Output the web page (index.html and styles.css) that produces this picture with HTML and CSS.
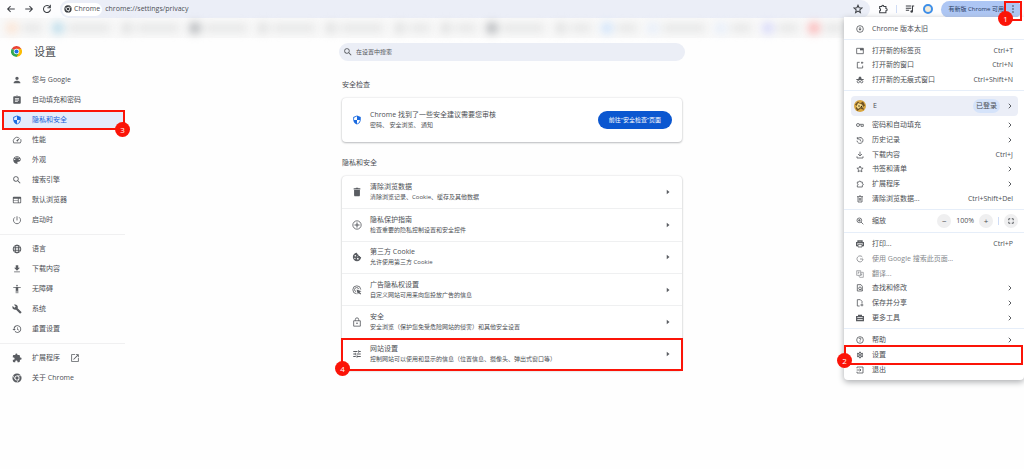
FILE: index.html
```
<!DOCTYPE html>
<html lang="zh-CN">
<head>
  <meta charset="UTF-8">
  <title>设置 - 隐私和安全</title>
  <meta name="viewport" content="width=device-width, initial-scale=1.0">
  <link rel="stylesheet" href="styles.css">
</head>
<body>

<!-- Icon sprite -->
<svg class="sprite" aria-hidden="true">
  <symbol id="back" viewBox="0 0 24 24"><path d="M21 12H4M11 5l-7 7 7 7" class="line"/></symbol>
  <symbol id="forward" viewBox="0 0 24 24"><path d="M3 12h17M13 5l7 7-7 7" class="line"/></symbol>
  <symbol id="reload" viewBox="0 0 24 24"><path d="M19 7a8.500 8.500 0 1 0 1.500 6M20 2v7h-7" class="line"/></symbol>
  <symbol id="chrome" viewBox="0 0 24 24"><path fill-rule="evenodd" d="M12 1a11 11 0 1 0 0 22 11 11 0 0 0 0-22zm0 5a6 6 0 1 1 0 12 6 6 0 0 1 0-12z"/><circle cx="12" cy="12" r="4"/><path d="M12 6.500h10M7 14.500L2.500 6.500M16.500 15l-5 8" stroke="#fff" stroke-width="1.500"/></symbol>
  <symbol id="star" viewBox="0 0 24 24"><path d="M12 3l2.700 6.100 6.600.6-5 4.400 1.500 6.500-5.800-3.400-5.800 3.400 1.500-6.500-5-4.400 6.600-.6z" class="line"/></symbol>
  <symbol id="puzzle" viewBox="0 0 24 24"><path d="M4 6h5c0-4 5-4 5 0h5v5c4 0 4 5 0 5v5H4v-5c3 0 3-5 0-5z" class="line"/></symbol>
  <symbol id="playlist" viewBox="0 0 24 24"><path d="M2 5h13M2 10h13M2 15h8M18 18V5h4" class="line"/><circle cx="16" cy="18" r="3"/></symbol>
  <symbol id="dots" viewBox="0 0 24 24"><circle cx="12" cy="3" r="2.500"/><circle cx="12" cy="12" r="2.500"/><circle cx="12" cy="21" r="2.500"/></symbol>
  <symbol id="person" viewBox="0 0 24 24"><path d="M12 12c2.210 0 4-1.790 4-4s-1.790-4-4-4-4 1.790-4 4 1.790 4 4 4zm0 2c-2.670 0-8 1.340-8 4v2h16v-2c0-2.660-5.330-4-8-4z"/></symbol>
  <symbol id="clipboard" viewBox="0 0 24 24"><path d="M19 3h-4.180C14.400 1.840 13.300 1 12 1c-1.300 0-2.400.84-2.820 2H5c-1.100 0-2 .9-2 2v14c0 1.100.9 2 2 2h14c1.100 0 2-.9 2-2V5c0-1.100-.9-2-2-2zm-7 0c.55 0 1 .45 1 1s-.45 1-1 1-1-.45-1-1 .45-1 1-1zm2 14H7v-2h7v2zm3-4H7v-2h10v2zm0-4H7V7h10v2z"/></symbol>
  <symbol id="shield" viewBox="0 0 24 24"><path d="M12 1L3 5v6c0 5.550 3.840 10.740 9 12 5.160-1.260 9-6.450 9-12V5l-9-4zm0 10.990h7c-.53 4.120-3.280 7.790-7 8.940V12H5V6.300l7-3.110v8.800z"/></symbol>
  <symbol id="speed" viewBox="0 0 24 24"><path d="M16 6A9.500 9.500 0 0 0 4 19h16a9.500 9.500 0 0 0 1-9" class="line thin"/><path d="M20 6l-7 10-3-3z"/></symbol>
  <symbol id="palette" viewBox="0 0 24 24"><path d="M12 3c-4.970 0-9 4.030-9 9s4.030 9 9 9c.83 0 1.500-.67 1.500-1.500 0-.39-.15-.74-.39-1.010-.23-.26-.38-.61-.38-.99 0-.83.67-1.500 1.500-1.500H16c2.760 0 5-2.240 5-5 0-4.420-4.030-8-9-8zm-5.500 9a1.500 1.500 0 1 1 0-3 1.500 1.500 0 0 1 0 3zm3-4a1.500 1.500 0 1 1 0-3 1.500 1.500 0 0 1 0 3zm5 0a1.500 1.500 0 1 1 0-3 1.500 1.500 0 0 1 0 3zm3 4a1.500 1.500 0 1 1 0-3 1.500 1.500 0 0 1 0 3z"/></symbol>
  <symbol id="search" viewBox="0 0 24 24"><path d="M15.500 14h-.79l-.28-.27A6.471 6.471 0 0 0 16 9.500 6.500 6.500 0 1 0 9.500 16c1.610 0 3.090-.59 4.230-1.570l.27.28v.79l5 4.990L20.490 19l-4.990-5zm-6 0C7.010 14 5 11.990 5 9.500S7.010 5 9.500 5 14 7.010 14 9.500 11.990 14 9.500 14z"/></symbol>
  <symbol id="web" viewBox="0 0 24 24"><path fill-rule="evenodd" d="M20 4H4a2 2 0 0 0-2 2v12c0 1.100.9 2 2 2h16a2 2 0 0 0 2-2V6a2 2 0 0 0-2-2zm-6 14H4v-3.500h10V18zm0-5H4V9h10v4zm6 5h-4V9h4v9z"/></symbol>
  <symbol id="power" viewBox="0 0 24 24"><path d="M12 3v10M7 5.500a8.500 8.500 0 1 0 10 0" class="line thin"/></symbol>
  <symbol id="globe" viewBox="0 0 24 24"><circle cx="12" cy="12" r="9" class="line"/><ellipse cx="12" cy="12" rx="4" ry="9" class="line"/><path d="M3.500 9h17M3.500 15h17" class="line"/></symbol>
  <symbol id="download" viewBox="0 0 24 24"><path d="M19 9h-4V3H9v6H5l7 7 7-7zM5 18v2h14v-2H5z"/></symbol>
  <symbol id="accessibility" viewBox="0 0 24 24"><path d="M12 2c1.100 0 2 .9 2 2s-.9 2-2 2-2-.9-2-2 .9-2 2-2zm9 7h-6v13h-2v-6h-2v6H9V9H3V7h18v2z"/></symbol>
  <symbol id="wrench" viewBox="0 0 24 24"><path d="M22.700 19l-9.100-9.100c.9-2.300.4-5-1.500-6.900-2-2-5-2.400-7.400-1.300L9 6 6 9 1.600 4.700C.4 7.100.9 10.100 2.900 12.100c1.900 1.900 4.600 2.400 6.900 1.500l9.100 9.100c.4.4 1 .4 1.400 0l2.300-2.300c.5-.4.5-1.100.1-1.400z"/></symbol>
  <symbol id="restore" viewBox="0 0 24 24"><path d="M13 3a9 9 0 0 0-9 9H1l3.890 3.890.07.14L9 12H6a7 7 0 1 1 2.060 4.940l-1.420 1.420A9 9 0 1 0 13 3zm-1 5v5l4.280 2.540.72-1.210-3.500-2.080V8H12z"/></symbol>
  <symbol id="extension" viewBox="0 0 24 24"><path d="M20.500 11H19V7c0-1.100-.9-2-2-2h-4V3.500a2.500 2.500 0 0 0-5 0V5H4c-1.100 0-1.990.9-1.990 2v3.800H3.500c1.490 0 2.700 1.210 2.700 2.700s-1.210 2.700-2.700 2.700H2V20c0 1.100.9 2 2 2h3.800v-1.500c0-1.490 1.210-2.700 2.700-2.700s2.700 1.210 2.700 2.700V22H17c1.100 0 2-.9 2-2v-4h1.500a2.500 2.500 0 0 0 0-5z"/></symbol>
  <symbol id="launch" viewBox="0 0 24 24"><path d="M19 19H5V5h7V3H3v18h18v-9h-2v7zM14 3v2h3.590l-9.830 9.830 1.410 1.410L19 6.410V10h2V3h-7z"/></symbol>
  <symbol id="trash" viewBox="0 0 24 24"><path d="M5 19c0 1.600.9 3 2 3h10c1.100 0 2-1.400 2-3V7H5v12zM20 3h-4.500l-1-1h-5l-1 1H4v3h16V3z"/></symbol>
  <symbol id="trash-line" viewBox="0 0 24 24"><path d="M3 5h18M9 3h6M6 5v16h12V5M10 9v8M14 9v8" class="line"/></symbol>
  <symbol id="guide" viewBox="0 0 24 24"><circle cx="12" cy="12" r="10" class="line thin"/><path d="M12 6v12M6 12h12" class="line"/></symbol>
  <symbol id="cookie" viewBox="0 0 24 24"><path fill-rule="evenodd" d="M12 2a10 10 0 1 0 10 10c-2 .5-3-1-3-2.500-2 .5-4-1-3.500-3C13.500 6.500 12 4.500 12 2zM8 7a2 2 0 1 1 0 4 2 2 0 0 1 0-4zm-1 7a1.500 1.500 0 1 1 0 3 1.500 1.500 0 0 1 0-3zm7 0a2 2 0 1 1 0 4 2 2 0 0 1 0-4zm-1-4a1 1 0 1 1 0 2 1 1 0 0 1 0-2z"/></symbol>
  <symbol id="ads" viewBox="0 0 24 24"><path d="M11 21a9.500 9.500 0 1 1 10-10M10 16a5 5 0 1 1 6-6" class="line thin"/><path d="M11 11l12 4-5 2 4 4-2 2-4-4-2 4z"/></symbol>
  <symbol id="lock" viewBox="0 0 24 24"><path d="M4 9h16v13H4zM8 9V6a4 4 0 0 1 8 0v3" class="line thin"/><circle cx="12" cy="15" r="2"/></symbol>
  <symbol id="tune" viewBox="0 0 24 24"><path d="M3 17v2h6v-2H3zM3 5v2h10V5H3zm10 16v-2h8v-2h-8v-2h-2v6h2zM7 9v2H3v2h4v2h2V9H7zm14 4v-2H11v2h10zm-6-4h2V7h4V5h-4V3h-2v6z"/></symbol>
  <symbol id="arrow" viewBox="0 0 24 24"><path d="M7 3l11 9-11 9z"/></symbol>
  <symbol id="chevron" viewBox="0 0 24 24"><path d="M7 3l9 9-9 9" class="line bold"/></symbol>
  <symbol id="update" viewBox="0 0 24 24"><circle cx="12" cy="12" r="10" class="line"/><path d="M12 6v6" class="line"/><path d="M7 11h10l-5 6z"/></symbol>
  <symbol id="tab" viewBox="0 0 24 24"><path d="M2 4h20v16H2z" class="line"/><path d="M12 4h10v6H12z"/></symbol>
  <symbol id="window" viewBox="0 0 24 24"><path d="M11 4H4v17h16v-7M15 5h7M18 2v7" class="line"/></symbol>
  <symbol id="incognito" viewBox="0 0 24 24"><path d="M7 9l2-7h6l2 7zM1 9h22v3H1z"/><circle cx="7" cy="17" r="3.500" class="line"/><circle cx="17" cy="17" r="3.500" class="line"/></symbol>
  <symbol id="key" viewBox="0 0 24 24"><circle cx="6" cy="12" r="4.500" class="line"/><path d="M10 10h12v6h-7v-5" class="line"/></symbol>
  <symbol id="history" viewBox="0 0 24 24"><path d="M4 3v6h6M4 9a9 9 0 1 1-1 5M12 8v5l4 3" class="line"/></symbol>
  <symbol id="save" viewBox="0 0 24 24"><path d="M12 2v12M6 9l6 6 6-6M3 16v5h18v-5" class="line"/></symbol>
  <symbol id="zoom-in" viewBox="0 0 24 24"><circle cx="10" cy="10" r="7" class="line"/><path d="M15 15l7 7M10 6v8M6 10h8" class="line"/></symbol>
  <symbol id="fullscreen" viewBox="0 0 24 24"><path d="M3 9V3h6M15 3h6v6M21 15v6h-6M9 21H3v-6" class="line bold"/></symbol>
  <symbol id="print" viewBox="0 0 24 24"><path d="M6 8V3h12v5M6 17H2V8h20v9h-4" class="line bold"/><path d="M6 13h12v8H6z" class="line"/></symbol>
  <symbol id="google" viewBox="0 0 24 24"><path d="M19 6a9 9 0 1 0 2 6h-9" class="line"/></symbol>
  <symbol id="translate" viewBox="0 0 24 24"><path d="M2 2h12v14H2zM14 7h8v15H11l-3-6M5 6h6M8 6c0 3-1 5-3 6M14 12h5M17 12l-3 6" class="line thin"/></symbol>
  <symbol id="find" viewBox="0 0 24 24"><path d="M19 21H4V2h11l4 5z" class="line"/><circle cx="12" cy="13" r="4" class="line"/><path d="M15 16l4 4" class="line"/></symbol>
  <symbol id="share" viewBox="0 0 24 24"><path d="M11 21H4V2h9l5 5v5M13 18h9M18 13v9" class="line"/></symbol>
  <symbol id="toolbox" viewBox="0 0 24 24"><path d="M2 8h20v12H2zM8 8V4h8v4M2 14h20" class="line bold"/></symbol>
  <symbol id="help" viewBox="0 0 24 24"><circle cx="12" cy="12" r="10" class="line"/><path d="M9 9c0-4 6-4 6 0 0 2-3 2-3 5M12 16v2" class="line"/></symbol>
  <symbol id="gear" viewBox="0 0 24 24"><path fill-rule="evenodd" d="M19.140 12.940c.04-.3.060-.61.060-.94s-.02-.64-.07-.94l2.030-1.580c.18-.14.230-.41.120-.61l-1.920-3.320c-.12-.22-.37-.29-.59-.22l-2.390.96c-.5-.38-1.030-.7-1.620-.94L14.400 2.810c-.04-.24-.24-.41-.48-.41h-3.840c-.24 0-.43.170-.47.410L9.250 5.350c-.59.240-1.130.570-1.620.940l-2.390-.96c-.22-.08-.47 0-.59.220L2.740 8.870c-.12.210-.08.470.120.610l2.030 1.580c-.05.3-.09.630-.09.940s.020.640.070.940l-2.030 1.580c-.18.140-.23.410-.12.610l1.920 3.320c.12.220.370.290.590.220l2.390-.96c.5.380 1.030.7 1.620.940l.36 2.540c.05.240.24.410.48.410h3.840c.24 0 .44-.17.470-.41l.36-2.540c.59-.24 1.130-.56 1.620-.94l2.390.96c.22.080.47 0 .59-.22l1.920-3.320c.12-.22.070-.47-.12-.61l-2.010-1.580zM12 7a5 5 0 1 1 0 10 5 5 0 0 1 0-10z"/><circle cx="12" cy="12" r="3"/></symbol>
  <symbol id="exit" viewBox="0 0 24 24"><path d="M3 7V3h18v18H3v-4M2 12h13M11 8l4 4-4 4" class="line"/></symbol>
</svg>

<!-- Browser toolbar -->
<header class="toolbar">
  <button class="tool-button" aria-label="后退"><svg class="icon"><use href="#back"/></svg></button>
  <button class="tool-button" aria-label="前进"><svg class="icon"><use href="#forward"/></svg></button>
  <button class="tool-button" aria-label="重新加载"><svg class="icon"><use href="#reload"/></svg></button>
  <div class="omnibox">
    <span class="chip"><svg class="icon small"><use href="#chrome"/></svg>Chrome</span>
    <input class="address" type="text" value="chrome://settings/privacy" aria-label="地址">
    <button class="tool-button" aria-label="添加书签"><svg class="icon"><use href="#star"/></svg></button>
  </div>
  <div class="tools">
    <button class="tool-button" aria-label="扩展程序"><svg class="icon"><use href="#puzzle"/></svg></button>
    <span class="divider"></span>
    <button class="tool-button" aria-label="媒体"><svg class="icon"><use href="#playlist"/></svg></button>
    <button class="profile-dot" aria-label="个人资料"></button>
  </div>
  <button class="update-pill">
    <span class="update-text">有新版 Chrome 可用</span>
    <span class="more"><svg class="icon small"><use href="#dots"/></svg><span class="mark"></span><span class="badge">1</span></span>
  </button>
</header>

<!-- Bookmarks -->
<div class="bookmarks">
  <span class="bookmark orange"></span>
  <span class="bookmark blue wide"></span>
  <span class="bookmark wide"></span>
  <span class="bookmark dark wide"></span>
  <span class="bookmark wide"></span>
  <span class="bookmark wide"></span>
  <span class="bookmark"></span>
  <span class="bookmark"></span>
  <span class="bookmark dark wide"></span>
  <span class="bookmark"></span>
  <span class="bookmark sky"></span>
  <span class="bookmark pale wide"></span>
  <span class="bookmark pale"></span>
  <span class="bookmark violet"></span>
  <span class="bookmark red"></span>
</div>

<div class="page">
  <aside class="sidebar">
    <div class="brand">
      <svg class="logo" viewBox="0 0 48 48">
        <path fill="#ea4335" d="M24 24L3.200 12A24 24 0 0 1 44.800 12z"/>
        <path fill="#fbbc04" d="M24 24l20.800-12A24 24 0 0 1 24 48z"/>
        <path fill="#34a853" d="M24 24v24A24 24 0 0 1 3.200 12z"/>
        <path fill="#fbbc04" d="M24 12h20.800L34 30 24 48z"/>
        <path fill="#34a853" d="M3.200 12L14 30l10 6 10-6-10 18z"/>
        <circle cx="24" cy="24" r="12" fill="#fff"/>
        <circle cx="24" cy="24" r="9" fill="#1a73e8"/>
      </svg>
      <h1>设置</h1>
    </div>
    <nav>
      <div class="nav-group">
        <a href="#" class="nav-item"><svg class="icon"><use href="#person"/></svg>您与 Google</a>
        <a href="#" class="nav-item"><svg class="icon"><use href="#clipboard"/></svg>自动填充和密码</a>
        <a href="#" class="nav-item active"><svg class="icon"><use href="#shield"/></svg>隐私和安全<span class="mark"></span><span class="badge">3</span></a>
        <a href="#" class="nav-item"><svg class="icon"><use href="#speed"/></svg>性能</a>
        <a href="#" class="nav-item"><svg class="icon"><use href="#palette"/></svg>外观</a>
        <a href="#" class="nav-item"><svg class="icon"><use href="#search"/></svg>搜索引擎</a>
        <a href="#" class="nav-item"><svg class="icon"><use href="#web"/></svg>默认浏览器</a>
        <a href="#" class="nav-item"><svg class="icon"><use href="#power"/></svg>启动时</a>
      </div>
      <div class="nav-group">
        <a href="#" class="nav-item"><svg class="icon"><use href="#globe"/></svg>语言</a>
        <a href="#" class="nav-item"><svg class="icon"><use href="#download"/></svg>下载内容</a>
        <a href="#" class="nav-item"><svg class="icon"><use href="#accessibility"/></svg>无障碍</a>
        <a href="#" class="nav-item"><svg class="icon"><use href="#wrench"/></svg>系统</a>
        <a href="#" class="nav-item"><svg class="icon"><use href="#restore"/></svg>重置设置</a>
      </div>
      <div class="nav-group">
        <a href="#" class="nav-item"><svg class="icon"><use href="#extension"/></svg>扩展程序<svg class="icon"><use href="#launch"/></svg></a>
        <a href="#" class="nav-item"><svg class="icon"><use href="#chrome"/></svg>关于 Chrome</a>
      </div>
    </nav>
  </aside>

  <main class="content">
    <label class="search">
      <svg class="icon"><use href="#search"/></svg>
      <input type="text" placeholder="在设置中搜索" aria-label="在设置中搜索">
    </label>

    <section>
      <h2>安全检查</h2>
      <div class="card check">
        <svg class="icon accent"><use href="#shield"/></svg>
        <div class="text">
          <h3>Chrome 找到了一些安全建议需要您审核</h3>
          <p>密码、 安全浏览、 通知</p>
        </div>
        <button class="primary">前往“安全检查”页面</button>
      </div>
    </section>

    <section>
      <h2>隐私和安全</h2>
      <div class="card list">
        <a href="#" class="row"><svg class="icon"><use href="#trash"/></svg>
          <span class="text"><strong>清除浏览数据</strong><span>清除浏览记录、Cookie、缓存及其他数据</span></span>
          <svg class="icon tiny"><use href="#arrow"/></svg></a>
        <a href="#" class="row"><svg class="icon"><use href="#guide"/></svg>
          <span class="text"><strong>隐私保护指南</strong><span>检查重要的隐私控制设置和安全控件</span></span>
          <svg class="icon tiny"><use href="#arrow"/></svg></a>
        <a href="#" class="row"><svg class="icon"><use href="#cookie"/></svg>
          <span class="text"><strong>第三方 Cookie</strong><span>允许使用第三方 Cookie</span></span>
          <svg class="icon tiny"><use href="#arrow"/></svg></a>
        <a href="#" class="row"><svg class="icon"><use href="#ads"/></svg>
          <span class="text"><strong>广告隐私权设置</strong><span>自定义网站可用来向您投放广告的信息</span></span>
          <svg class="icon tiny"><use href="#arrow"/></svg></a>
        <a href="#" class="row"><svg class="icon"><use href="#lock"/></svg>
          <span class="text"><strong>安全</strong><span>安全浏览（保护您免受危险网站的侵害）和其他安全设置</span></span>
          <svg class="icon tiny"><use href="#arrow"/></svg></a>
        <a href="#" class="row"><svg class="icon"><use href="#tune"/></svg>
          <span class="text"><strong>网站设置</strong><span>控制网站可以使用和显示的信息（位置信息、摄像头、弹出式窗口等）</span></span>
          <svg class="icon tiny"><use href="#arrow"/></svg>
          <span class="mark"></span><span class="badge">4</span></a>
      </div>
    </section>
  </main>
</div>

<!-- Main menu -->
<div class="menu">
  <div class="menu-group">
    <button class="menu-item"><svg class="icon small"><use href="#update"/></svg><span>Chrome 版本太旧</span></button>
  </div>
  <div class="menu-group three">
    <button class="menu-item"><svg class="icon small"><use href="#tab"/></svg><span>打开新的标签页</span><kbd>Ctrl+T</kbd></button>
    <button class="menu-item"><svg class="icon small"><use href="#window"/></svg><span>打开新的窗口</span><kbd>Ctrl+N</kbd></button>
    <button class="menu-item"><svg class="icon small"><use href="#incognito"/></svg><span>打开新的无痕式窗口</span><kbd>Ctrl+Shift+N</kbd></button>
  </div>
  <div class="menu-account">
    <button class="account">
      <svg class="avatar" viewBox="0 0 24 24"><circle cx="12" cy="12" r="12" fill="#d9a640"/><path d="M2 9l6-6 4 4 6-4 4 8-4 3 2 6-7-3-6 5-4-6 4-3z" fill="#705325"/><path d="M8 6l8 3 3 6-6-1-5 4-3-5z" fill="#f6dc8d"/><circle cx="10" cy="12" r="1.500" fill="#33270f"/><circle cx="15" cy="13" r="1.500" fill="#33270f"/></svg>
      <span>E</span><span class="status">已登录</span><svg class="icon tiny"><use href="#chevron"/></svg>
    </button>
  </div>
  <div class="menu-group six flush">
    <button class="menu-item"><svg class="icon small"><use href="#key"/></svg><span>密码和自动填充</span><svg class="icon tiny"><use href="#chevron"/></svg></button>
    <button class="menu-item"><svg class="icon small"><use href="#history"/></svg><span>历史记录</span><svg class="icon tiny"><use href="#chevron"/></svg></button>
    <button class="menu-item"><svg class="icon small"><use href="#save"/></svg><span>下载内容</span><kbd>Ctrl+J</kbd></button>
    <button class="menu-item"><svg class="icon small"><use href="#star"/></svg><span>书签和清单</span><svg class="icon tiny"><use href="#chevron"/></svg></button>
    <button class="menu-item"><svg class="icon small"><use href="#puzzle"/></svg><span>扩展程序</span><svg class="icon tiny"><use href="#chevron"/></svg></button>
    <button class="menu-item"><svg class="icon small"><use href="#trash-line"/></svg><span>清除浏览数据...</span><kbd>Ctrl+Shift+Del</kbd></button>
  </div>
  <div class="menu-zoom">
    <svg class="icon small"><use href="#zoom-in"/></svg><span>缩放</span>
    <button class="round" aria-label="缩小">−</button>
    <output>100%</output>
    <button class="round" aria-label="放大">+</button>
    <i class="divider"></i>
    <button class="round" aria-label="全屏"><svg class="icon tiny"><use href="#fullscreen"/></svg></button>
  </div>
  <div class="menu-group six">
    <button class="menu-item"><svg class="icon small"><use href="#print"/></svg><span>打印...</span><kbd>Ctrl+P</kbd></button>
    <button class="menu-item muted"><svg class="icon small"><use href="#google"/></svg><span>使用 Google 搜索此页面...</span></button>
    <button class="menu-item muted"><svg class="icon small"><use href="#translate"/></svg><span>翻译...</span></button>
    <button class="menu-item"><svg class="icon small"><use href="#find"/></svg><span>查找和修改</span><svg class="icon tiny"><use href="#chevron"/></svg></button>
    <button class="menu-item"><svg class="icon small"><use href="#share"/></svg><span>保存并分享</span><svg class="icon tiny"><use href="#chevron"/></svg></button>
    <button class="menu-item"><svg class="icon small"><use href="#toolbox"/></svg><span>更多工具</span><svg class="icon tiny"><use href="#chevron"/></svg></button>
  </div>
  <div class="menu-group three">
    <button class="menu-item"><svg class="icon small"><use href="#help"/></svg><span>帮助</span><svg class="icon tiny"><use href="#chevron"/></svg></button>
    <button class="menu-item marked"><svg class="icon small"><use href="#gear"/></svg><span>设置</span><span class="mark"></span><span class="badge">2</span></button>
    <button class="menu-item"><svg class="icon small"><use href="#exit"/></svg><span>退出</span></button>
  </div>
</div>

</body>
</html>
```
FILE: styles.css
```
* {
  box-sizing: border-box;
}

body {
  margin: 0;
  background: #fefefe;
  color: #4c4f54;
  font-family: "Open Sans", "Noto Sans CJK SC", sans-serif;
  font-size: 7px;
  line-height: 10px;
}

button, input, kbd {
  font: inherit;
  color: inherit;
}

button {
  border: none;
  padding: 0;
  background: none;
  cursor: pointer;
}

input {
  border: none;
  outline: none;
  padding: 0;
  background: none;
  min-width: 0;
  flex: 1;
}

a {
  color: inherit;
  text-decoration: none;
}

h1, h2, h3, p {
  margin: 0;
  font-weight: normal;
}

.sprite {
  display: none;
}

.icon {
  display: block;
  flex: none;
  width: 10px;
  height: 10px;
  fill: currentColor;
  color: #5a5d62;
}

.icon.small {
  width: 8px;
  height: 8px;
}

.icon.tiny {
  width: 6px;
  height: 6px;
}

.icon.accent {
  color: #1a6ae0;
}

.line {
  fill: none;
  stroke: currentColor;
  stroke-width: 2.5;
}

.line.thin {
  stroke-width: 2;
}

.line.bold {
  stroke-width: 4;
}

/* Numbered callouts */
.mark {
  position: absolute;
  inset: 0;
  border: 2px solid #fb1408;
}

.badge {
  position: absolute;
  width: 15px;
  height: 15px;
  border-radius: 50%;
  background: #fb1408;
  color: #fff;
  font-size: 8px;
  line-height: 15px;
  text-align: center;
}

/* Toolbar */
.toolbar {
  display: flex;
  align-items: center;
  height: 18px;
  padding: 0 2px 0 6px;
  gap: 8px;
  background: #fdfdfe;
}

.toolbar .icon {
  color: #3c3f44;
}

.omnibox {
  display: flex;
  align-items: center;
  flex: 1;
  height: 18px;
  padding: 0 7px 0 2px;
  border-radius: 9px;
  background: #ebeef7;
}

.chip {
  display: flex;
  align-items: center;
  gap: 2px;
  height: 13px;
  padding: 0 2px;
  margin-right: 3px;
  border-radius: 7px;
  background: #fff;
}

.tools {
  display: flex;
  align-items: center;
  gap: 8px;
}

.divider {
  width: 1px;
  height: 8px;
  background: #cfdcf5;
}

.profile-dot {
  width: 10px;
  height: 10px;
  border: 2px solid #3d8ee8;
  border-radius: 50%;
  background: #f3ead8;
}

.update-pill {
  display: flex;
  align-items: center;
  justify-content: space-between;
  height: 17px;
  padding-left: 7px;
  border-radius: 9px;
  background: #adc6f4;
  color: #2a3c60;
  font-size: 6px;
  white-space: nowrap;
}

.more {
  position: relative;
  z-index: 3;
  display: grid;
  place-items: center;
  flex: none;
  width: 18px;
  height: 17px;
}

.more .mark {
  bottom: -3px;
}

.more .badge {
  left: -6px;
  top: 10px;
}

/* Bookmarks are unreadable on purpose */
.bookmarks {
  display: flex;
  align-items: center;
  justify-content: space-between;
  height: 20px;
  padding: 0 180px 0 6px;
  background: #f9f9f9;
}

.bookmark {
  display: flex;
  align-items: center;
  gap: 4px;
  filter: blur(4px);
}

.bookmark::before {
  content: "";
  width: 12px;
  height: 12px;
  border-radius: 50%;
  background: #e0e1e1;
}

.bookmark::after {
  content: "";
  width: 20px;
  height: 8px;
  background: #e5e6e6;
}

.bookmark.wide::after {
  width: 42px;
}

.bookmark.orange::before {
  background: #fbe3d2;
}

.bookmark.blue::before {
  background: #b9dbea;
}

.bookmark.dark::before {
  background: #b4b7ba;
}

.bookmark.sky::before {
  background: #cfe3fb;
}

.bookmark.pale::before {
  background: #e6eefa;
}

.bookmark.violet::before {
  background: #d6d8fa;
}

.bookmark.red::before {
  background: #fbb4b4;
}

/* Page */
.page {
  display: grid;
  grid-template-columns: 125px 1fr 125px;
}

.brand {
  display: flex;
  align-items: center;
  gap: 12px;
  height: 27px;
  padding-left: 11px;
}

.logo {
  width: 11px;
  height: 11px;
}

h1 {
  font-size: 11px;
  line-height: 14px;
}

nav {
  padding-top: 5px;
}

.nav-group + .nav-group {
  margin-top: 4px;
  padding-top: 4px;
  border-top: 1px solid #f0f0f1;
}

.nav-item {
  position: relative;
  display: flex;
  align-items: center;
  gap: 10px;
  height: 20px;
  margin-left: 2px;
  padding-left: 10px;
}

.nav-item.active {
  background: #e4ecfb;
  color: #1a62d8;
}

.nav-item.active .icon {
  color: #1a6ae0;
}

.nav-item .badge {
  right: -5px;
  bottom: -7px;
}

.content {
  width: 100%;
  max-width: 346px;
  margin: 0 auto;
  padding-top: 5px;
}

.search {
  display: flex;
  align-items: center;
  gap: 3px;
  height: 18px;
  padding: 0 4px;
  margin-bottom: 17px;
  border-radius: 9px;
  background: #ebeef6;
  font-size: 6px;
}

.search input::placeholder {
  color: #54575c;
  opacity: 1;
}

section {
  margin: 0 3px 14px;
}

h2 {
  font-size: 7px;
  line-height: 14px;
  margin-bottom: 6px;
}

.card {
  border-radius: 4px;
  background: #fff;
  box-shadow: 0 1px 2px #bcbdbf, 0 0 2px #d8d9db;
}

.check {
  display: flex;
  align-items: center;
  gap: 8px;
  min-height: 44px;
  padding: 0 10px;
}

.text {
  flex: 1;
  font-size: 6px;
}

.text strong, h3 {
  display: block;
  font-size: 7px;
  font-weight: normal;
}

.primary {
  height: 18px;
  padding: 0 11px;
  border-radius: 9px;
  background: #0b57d0;
  color: #fff;
  font-size: 6px;
}

.list {
  display: grid;
  grid-auto-rows: 1fr;
  min-height: 194px;
}

.row {
  position: relative;
  display: flex;
  align-items: center;
  gap: 8px;
  padding: 0 11px 0 10px;
}

.row + .row {
  border-top: 1px solid #eff0f1;
}

.row .mark {
  inset: -1px;
}

.row .badge {
  left: -7px;
  bottom: -6px;
}

/* Main menu */
.menu {
  position: absolute;
  z-index: 2;
  top: 17px;
  right: 0;
  width: 180px;
  border-radius: 0 0 4px 4px;
  background: #fff;
  box-shadow: 0 2px 6px #a9abae;
}

.menu-group {
  display: grid;
  grid-auto-rows: 1fr;
  padding: 4px 0 3px;
  min-height: 23px;
  border-bottom: 1px solid #e6eef9;
}

.menu-group:last-child {
  border-bottom: none;
}

.three {
  min-height: 51px;
}

.six {
  min-height: 96px;
}

.flush {
  padding-top: 2px;
  min-height: 94px;
}

.menu-item {
  position: relative;
  display: flex;
  align-items: center;
  gap: 8px;
  padding: 0 11px 0 12px;
  text-align: left;
}

.menu-item > span:nth-child(2) {
  flex: 1;
}

.muted, .muted .icon {
  color: #85888c;
}

.marked .mark {
  inset: -3px 1px -3px 0;
}

.marked .badge {
  left: -7px;
  bottom: -6px;
}

.menu-account {
  padding: 5px 6px 0 7px;
}

.account {
  display: flex;
  align-items: center;
  gap: 7px;
  width: 100%;
  height: 20px;
  padding: 0 5px 0 3px;
  border-radius: 4px;
  background: #ebeef7;
  text-align: left;
}

.account .status {
  margin-left: auto;
  padding: 2px 3px;
  border-radius: 7px;
  background: #d5e3fa;
}

.avatar {
  width: 12px;
  height: 12px;
}

.menu-zoom {
  display: flex;
  align-items: center;
  gap: 5px;
  height: 23px;
  padding: 0 6px 0 12px;
  border-bottom: 1px solid #e6eef9;
}

.menu-zoom > span {
  flex: 1;
  padding-left: 3px;
}

.round {
  display: grid;
  place-items: center;
  width: 14px;
  height: 14px;
  border-radius: 50%;
  background: #efeff0;
  font-size: 8px;
}

@media (max-width: 700px) {
  .page {
    grid-template-columns: 125px 1fr;
  }
}
```
